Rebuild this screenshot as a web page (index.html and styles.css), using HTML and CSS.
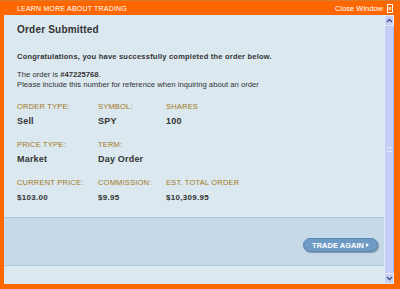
FILE: index.html
```html
<!DOCTYPE html>
<html>
<head>
<meta charset="utf-8">
<link rel="stylesheet" href="styles.css">
</head>
<body>
<div class="window">
  <div class="topbar">
    <span class="learn">LEARN MORE ABOUT TRADING</span>
    <span class="close">Close Window <span class="xbox">x</span></span>
  </div>
  <div class="main">
    <div class="content">
      <div class="info">
        <h1 class="title">Order Submitted</h1>
        <p class="congrats">Congratulations, you have successfully completed the order below.</p>
        <p class="note">The order is <b>#47225768</b>.<br>Please include this number for reference when inquiring about an order</p>
        <div class="grid">
          <div class="cell"><div class="label">ORDER TYPE:</div><div class="value">Sell</div></div>
          <div class="cell"><div class="label">SYMBOL:</div><div class="value">SPY</div></div>
          <div class="cell"><div class="label">SHARES</div><div class="value">100</div></div>
          <div class="cell"><div class="label">PRICE TYPE:</div><div class="value">Market</div></div>
          <div class="cell"><div class="label">TERM:</div><div class="value">Day Order</div></div>
          <div class="cell"></div>
          <div class="cell"><div class="label">CURRENT PRICE:</div><div class="value small">$103.00</div></div>
          <div class="cell"><div class="label">COMMISSION:</div><div class="value small">$9.95</div></div>
          <div class="cell"><div class="label">EST. TOTAL ORDER</div><div class="value small">$10,309.95</div></div>
        </div>
      </div>
      <div class="band">
        <button class="trade">TRADE AGAIN <span class="tri"></span></button>
      </div>
      <div class="foot"></div>
    </div>
    <div class="scrollbar">
      <div class="sbtn"><svg width="7" height="5" viewBox="0 0 7 5"><path d="M1 4 L3.5 1.5 L6 4" fill="none" stroke="#3d4f86" stroke-width="1.3"/></svg></div>
      <div class="thumb"><div class="grip"></div></div>
      <div class="sbtn"><svg width="7" height="5" viewBox="0 0 7 5"><path d="M1 1 L3.5 3.5 L6 1" fill="none" stroke="#3d4f86" stroke-width="1.3"/></svg></div>
    </div>
  </div>
</div>
</body>
</html>
```
FILE: styles.css
```css
* { box-sizing: border-box; }
html, body { margin: 0; padding: 0; }
body { width: 400px; height: 289px; overflow: hidden; font-family: "Liberation Sans", Arial, sans-serif; }
.window {
  width: 400px; height: 289px;
  background: #fe6600;
  border-top: 1px solid #d9792a;
  display: flex; flex-direction: column;
  padding: 0 6px 5px 4px;
}
.topbar {
  height: 14px;
  display: flex; justify-content: space-between; align-items: center;
  color: #fff; font-size: 7px;
  padding: 0 1px 0 13px;
}
.learn { letter-spacing: 0.2px; }
.close { display: flex; align-items: center; gap: 4px; font-size: 7.5px; }
.xbox {
  display: inline-flex; align-items: center; justify-content: center;
  width: 6px; height: 9px; border: 1px solid #fff; font-size: 6px; line-height: 1; font-weight: bold;
}
.main { flex: 1; display: flex; min-height: 0; }
.content { flex: 1; display: flex; flex-direction: column; background: #dbe8ef; }
.info { height: 202px; padding: 9px 0 0 13px; color: #333; }
.title { margin: 0; font-size: 10px; font-weight: bold; color: #333; letter-spacing: 0.2px; }
.congrats { margin: 17px 0 0; font-size: 7.5px; font-weight: bold; letter-spacing: 0.22px; }
.note { margin: 9px 0 0; font-size: 7.7px; line-height: 10px; }
.note b { font-weight: bold; }
.grid { display: grid; grid-template-columns: 81px 68px 120px; row-gap: 14px; margin-top: 12px; }
.label { font-size: 7.5px; color: #a27820; letter-spacing: 0.2px; height: 11px; }
.value { font-size: 9px; font-weight: bold; color: #333; margin-top: 3px; letter-spacing: 0.2px; }
.value.small { font-size: 8px; letter-spacing: 0.3px; margin-top: 4px; }
.band {
  height: 49px; background: #c6d9e8;
  border-top: 1px solid #b3c6d4; border-bottom: 1px solid #b3c6d4;
  display: flex; justify-content: flex-end; align-items: center;
  padding-right: 6px;
}
.trade {
  height: 14px; width: 75px; border-radius: 7px;
  background: #6e9bc6; border: 1px solid #5a86b1;
  box-shadow: 1px 1px 1px rgba(60, 80, 100, 0.45);
  color: #fff; font-family: "Liberation Sans", Arial, sans-serif; font-size: 7.5px; font-weight: bold;
  display: flex; align-items: center; justify-content: center; gap: 2px; padding: 0;
  margin-top: 7px;
}
.tri { width: 0; height: 0; border-left: 3px solid #fff; border-top: 2.5px solid transparent; border-bottom: 2.5px solid transparent; }
.foot { flex: 1; }
.scrollbar { width: 10px; display: flex; flex-direction: column; background: #dbe8ef; }
.sbtn {
  height: 11px; background: #c7d0f2; border: 1px solid #e6ebfb;
  display: flex; align-items: center; justify-content: center;
}
.thumb {
  flex: 1; background: #c3cdf6; border-left: 1px solid #e2e7fb; border-right: 1px solid #aab6ea;
  display: flex; align-items: center; justify-content: center;
}
.grip { width: 5px; height: 5px; border-top: 1px solid #e8ecfc; border-bottom: 1px solid #e8ecfc; }
```
